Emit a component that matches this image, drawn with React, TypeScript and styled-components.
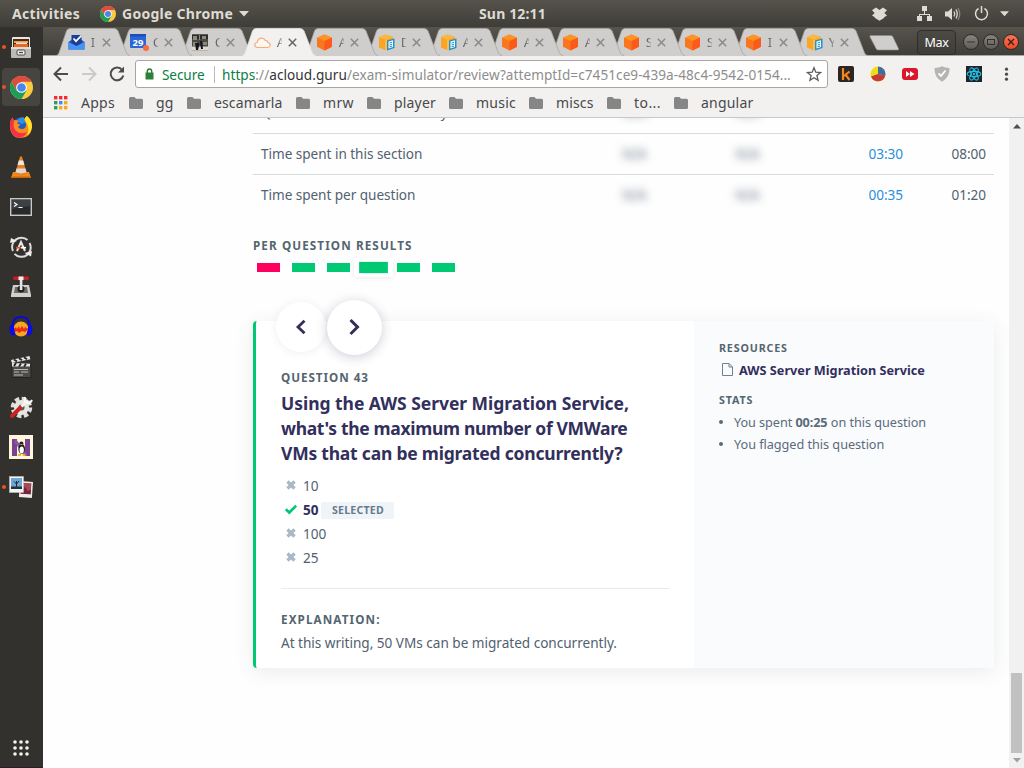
import React from 'react';
import styled, { createGlobalStyle, css } from 'styled-components';

const Global = createGlobalStyle`
  * { box-sizing: border-box; }
  html, body { margin: 0; padding: 0; overflow: hidden; }
  body { font-family: "Noto Sans", "Open Sans", sans-serif; font-size: 13.6px; color: #52616f; }
  svg { display: block; flex: none; }
`;

const Txt = styled.span<{ $ls?: number }>`
  white-space: pre;
  letter-spacing: ${(p) => p.$ls ?? 0}px;
`;

/* ---------- desktop ---------- */
const Desktop = styled.div`
  width: 1024px;
  height: 768px;
  display: flex;
  flex-direction: column;
  overflow: hidden;
  background: #fefefe;
`;
const TopBar = styled.header`
  height: 27px;
  flex: none;
  display: grid;
  grid-template-columns: 467px auto 1fr;
  align-items: center;
  padding: 0 15px 0 12px;
  color: #dfdbd2;
  font-size: 14px;
  font-weight: 700;
  background: linear-gradient(#55534b, #3f3d38);
`;
const TopLeft = styled.div`
  display: flex;
  align-items: center;
`;
const AppMenu = styled.div`
  display: flex;
  align-items: center;
  gap: 6px;
  margin-left: 20px;
`;
const TopRight = styled.div`
  display: flex;
  align-items: center;
  justify-content: flex-end;
`;
const Gap = styled.i<{ $w: number }>`
  width: ${(p) => p.$w}px;
  flex: none;
`;
const Main = styled.div`
  flex: 1;
  display: flex;
  min-height: 0;
`;
const Dock = styled.nav`
  width: 43px;
  flex: none;
  display: flex;
  flex-direction: column;
  background: #33312d;
  border-bottom: 1px solid #2e1c2c;
`;
const DockItem = styled.div<{ $running?: boolean }>`
  height: 40px;
  flex: none;
  display: flex;
  align-items: center;
  padding-left: 2px;
  &::before {
    content: "";
    width: 4px;
    height: 4px;
    border-radius: 50%;
    margin-right: -4px;
    z-index: 1;
    background: ${(p) => (p.$running ? '#e9541f' : 'transparent')};
  }
`;
const DockTile = styled.div<{ $active?: boolean }>`
  width: 38px;
  height: 38px;
  display: grid;
  place-items: center;
  border-radius: 4px;
  background: ${(p) => (p.$active ? '#474540' : 'transparent')};
`;
const DockApps = styled.div`
  margin: auto 0 11px 13px;
`;

/* ---------- browser ---------- */
const Browser = styled.div`
  flex: 1;
  display: flex;
  flex-direction: column;
  min-width: 0;
`;
const TabStrip = styled.div`
  height: 29px;
  flex: none;
  display: flex;
  align-items: flex-start;
  padding: 1px 5px 0 13px;
  background: linear-gradient(#57544c, #403e39);
  border-bottom: 1px solid #a9a7a4;
`;
const TabBox = styled.div<{ $w: number; $z: number }>`
  width: ${(p) => p.$w}px;
  height: 28px;
  flex: none;
  display: flex;
  align-items: center;
  position: relative;
  z-index: ${(p) => p.$z};
  padding-left: 12px;
`;
const TabShape = styled.svg`
  position: absolute;
  left: 0;
  top: 0;
  z-index: -1;
`;
const TabIcon = styled.span`
  width: 17px;
`;
const TabTitle = styled.span`
  width: 5px;
  margin-left: 6px;
  overflow: hidden;
  white-space: nowrap;
  font-size: 12px;
  color: #4a4a4a;
  -webkit-mask-image: linear-gradient(90deg, #000 10%, rgba(0, 0, 0, 0.25));
`;
const TabClose = styled.svg`
  margin-left: 6px;
`;
const WinButtons = styled.div`
  display: flex;
  align-items: center;
  gap: 4px;
  height: 28px;
  margin-left: auto;
`;
const UserButton = styled.div`
  width: 39px;
  height: 25px;
  margin-right: 3px;
  display: grid;
  place-items: center;
  border: 1px solid #2f2d2a;
  border-radius: 4px;
  background: linear-gradient(#4b4943, #403e3a);
  color: #fff;
  font-size: 12.6px;
`;
const WinButton = styled.div<{ $close?: boolean }>`
  width: 16px;
  height: 16px;
  border-radius: 50%;
  display: grid;
  place-items: center;
  border: 1px solid #2d2c28;
  background: ${(p) => (p.$close ? 'linear-gradient(#f7745a,#ec4a23)' : 'linear-gradient(#85837b,#5f5d56)')};
`;
const Toolbar = styled.div`
  height: 36px;
  flex: none;
  display: flex;
  align-items: center;
  padding: 0 9px;
  background: #f2f1f0;
`;
const UrlBox = styled.div`
  width: 693px;
  height: 28px;
  flex: none;
  display: flex;
  align-items: center;
  margin: 0 10px 0 9px;
  padding: 0 5px 0 8px;
  background: #fff;
  border: 1px solid #a8a6a3;
  border-radius: 3px;
  color: #8e8e8e;
`;
const Secure = styled.span`
  margin-left: 7px;
  width: 53px;
  color: #0b8043;
  white-space: nowrap;
  border-right: 1px solid #b9b9b9;
  line-height: 17px;
`;
const Url = styled.span`
  margin-left: 7px;
  white-space: nowrap;
  flex: 1;
  b { font-weight: 400; color: #0b8043; }
  em { font-style: normal; color: #333; }
`;
const Extensions = styled.div`
  display: flex;
  gap: 16px;
`;
const Bookmarks = styled.div`
  height: 26px;
  flex: none;
  display: flex;
  padding: 0 0 4px 11px;
  background: #f2f1f0;
  border-bottom: 1px solid #c9c8c6;
  color: #47494c;
  font-size: 14px;
`;
const Bookmark = styled.div<{ $w: number }>`
  width: ${(p) => p.$w}px;
  display: flex;
  align-items: center;
  gap: 13px;
`;
const Viewport = styled.div`
  flex: 1;
  display: flex;
  min-height: 0;
`;
const Page = styled.main`
  width: 966px;
  padding-left: 210px;
  overflow: hidden;
`;
const Scrollbar = styled.div`
  width: 15px;
  display: flex;
  flex-direction: column;
  align-items: center;
  padding: 6px 0 5px;
  background: #f1f1f1;
`;
const Thumb = styled.div`
  width: 11px;
  height: 80px;
  margin: auto 0 5px;
  background: #c1c1c1;
`;

/* ---------- results page ---------- */
const Row = styled.div`
  width: 741px;
  height: 41px;
  display: grid;
  grid-template-columns: 317px 113px 113px 99px 83px;
  align-items: center;
  padding: 0 8px 2px;
  border-bottom: 1px solid #d9dadc;
  &:first-child { margin-top: -25px; padding-bottom: 4px; }
  &:last-child { border-bottom: 0; }
`;
const Blurred = styled.span`
  justify-self: center;
  color: transparent;
  text-shadow: 0 0 8px rgba(82, 97, 120, 0.9);
`;
const Value = styled.span<{ $blue?: boolean }>`
  justify-self: end;
  letter-spacing: -0.05px;
  color: ${(p) => (p.$blue ? '#2a8fdd' : '#52616f')};
`;
const Heading = styled.h3<{ $ls: number; $size?: number }>`
  margin: 0;
  font-weight: 700;
  white-space: nowrap;
  color: #54656f;
  line-height: 16px;
  font-size: ${(p) => p.$size ?? 11.7}px;
  letter-spacing: ${(p) => p.$ls}px;
`;
const PerQuestion = styled.section`
  padding-top: 21px;
`;
const Marks = styled.div`
  display: flex;
  gap: 4px;
  margin-top: 7px;
`;
const Mark = styled.div<{ $bad?: boolean; $active?: boolean }>`
  padding: 3px 4px;
  ${(p) => p.$active && css`
    transform: scale(1.25);
    background: #fff;
    box-shadow: 0 1px 4px rgba(40, 50, 70, 0.1);
  `}
  &::before {
    content: "";
    display: block;
    width: 23px;
    height: 9px;
    background: ${(p) => (p.$bad ? '#ff0060' : '#00c873')};
  }
`;
const Card = styled.article`
  width: 741px;
  height: 347px;
  margin-top: 46px;
  display: flex;
  border-left: 3px solid #00c873;
  border-radius: 4px;
  background: #fff;
  box-shadow: 0 4px 20px rgba(40, 50, 80, 0.09);
`;
const Question = styled.div`
  width: 438px;
  padding: 0 25px;
`;
const Pager = styled.div`
  height: 54px;
  display: flex;
  align-items: center;
  gap: 1px;
  margin: -21px 0 15px -5px;
`;
const Round = styled.div<{ $big?: boolean }>`
  width: ${(p) => (p.$big ? 55 : 50)}px;
  height: ${(p) => (p.$big ? 55 : 50)}px;
  border-radius: 50%;
  display: grid;
  place-items: center;
  background: #fff;
  box-shadow: ${(p) => (p.$big ? '0 2px 12px rgba(50,46,95,0.24)' : '0 1px 10px rgba(50,46,95,0.08)')};
`;
const Title = styled.h2`
  margin: 6px 0 7px;
  font-size: 17.5px;
  line-height: 25px;
  font-weight: 700;
  color: #322f5c;
  span { display: block; }
`;
const Answer = styled.div<{ $right?: boolean }>`
  height: 24px;
  display: flex;
  align-items: center;
  padding-left: 4px;
  span { margin-left: 6px; letter-spacing: -0.05px; }
  ${(p) => p.$right && css`
    font-weight: 700;
    color: #322f5c;
  `}
`;
const Badge = styled.em`
  width: 73px;
  height: 17px;
  margin: 2px 0 0 3px;
  display: grid;
  place-items: center;
  border-radius: 2px;
  background: #f0f4f8;
  color: #647b8e;
  font-size: 10.6px;
  font-style: normal;
  letter-spacing: 0.2px;
`;
const Explanation = styled.div`
  margin-top: 19px;
  padding-top: 22px;
  border-top: 1px solid #e8eaec;
  p { margin: 6px 0 0; line-height: 20px; }
`;
const Aside = styled.aside`
  flex: 1;
  padding: 19px 25px;
  background: #fafbfd;
  border-radius: 0 4px 4px 0;
  font-size: 12.7px;
`;
const Resource = styled.div`
  height: 20px;
  display: flex;
  align-items: center;
  gap: 6px;
  margin: 4px 0 12px;
  padding-left: 3px;
  font-weight: 700;
  color: #322f5c;
  svg { margin-top: -2px; }
`;
const Stats = styled.div`
  margin-top: 3px;
`;
const Stat = styled.div`
  height: 22px;
  display: flex;
  align-items: center;
  color: #5a6b7b;
  &::before {
    content: "";
    width: 4px;
    height: 4px;
    border-radius: 50%;
    margin-right: 11px;
    background: #5a6b7b;
  }
`;

/* ---------- icons ---------- */
const Chrome = ({ s }: { s: number }) => (
  <svg width={s} height={s} viewBox="0 0 24 24">
    <circle cx="12" cy="12" r="12" fill="#fbca3f" />
    <path d="M1.6 6A12 12 0 0 1 22.4 6H12L6.8 15z" fill="#de4b3f" />
    <path d="M1.6 6A12 12 0 0 0 12 24L17.2 15 6.8 15z" fill="#1c9e5a" />
    <circle cx="12" cy="12" r="5.6" fill="#fff" />
    <circle cx="12" cy="12" r="4.5" fill="#4786ee" />
  </svg>
);
const Caret = ({ w }: { w: number }) => (
  <svg width={w} height="6" viewBox="0 0 10 6"><path d="M0 0H10L5 5.5z" fill="#dfdbd2" /></svg>
);

const dockIcons: Record<string, React.ReactNode> = {
  files: (
    <svg width="22" height="23" viewBox="0 0 22 23">
      <rect x="2" y="1" width="18" height="13" rx="1" fill="#e8e6e3" />
      <rect x="3" y="3" width="16" height="9" fill="#4b2c19" />
      <path d="M4 5H18V7H4z" fill="#f29b57" /><path d="M4 8H18V11H4z" fill="#e66a24" />
      <path d="M6 6.5H17V8H6z" fill="#fbe0c6" />
      <rect x="1" y="11" width="20" height="11" rx="1" fill="#bcbab7" />
      <rect x="1" y="11" width="20" height="2" fill="#dedcda" />
      <rect x="7" y="14" width="8" height="5" rx="1" fill="#f3f3f3" stroke="#4b4b4b" />
      <path d="M9 16.5H13" stroke="#444" strokeWidth="1.3" />
    </svg>
  ),
  chrome: <Chrome s={23} />,
  firefox: (
    <svg width="24" height="24" viewBox="0 0 24 24">
      <circle cx="12" cy="12" r="9.500" fill="#1f5fc4" />
      <path d="M9 4Q12 1.500 15 2.500L17 7 13 9 9 7z" fill="#2f8fe6" />
      <path d="M1 10Q1 5 3.500 2.500L5 5.500Q7.500 4.500 9.500 6L8 8.300Q10 9 11.500 9.500L9 12Q10 14.500 14 14Q17.500 13 17 9L15.500 4.500Q16 2 18 1Q23 5 23 12Q22 23 12 23Q1 23 1 10z" fill="#fb8b1e" />
      <path d="M1 10Q1 5 3.500 2.500L5 6Q3.500 12 7 16Q12 20 18 17Q15 23 10 22.800Q1 21 1 10z" fill="#f4304b" />
      <path d="M18 1Q23 5 23 12Q22 18 18 20Q21 14 17.500 8L15.500 4.500Q16 2 18 1z" fill="#ffe226" />
    </svg>
  ),
  vlc: (
    <svg width="22" height="24" viewBox="0 0 22 24">
      <path d="M3 17H19L21 23H1z" fill="#f08a1d" /><path d="M1 21.500H21V23H1z" fill="#c96509" />
      <path d="M10 1.500h2L17 19Q11 22 5 19z" fill="#ee7f16" />
      <path d="M8.800 5.500h4.400l1.200 4.500H7.600z" fill="#e8e8e8" />
      <path d="M6.500 13.500h9l1 3.800Q11 19.500 5.500 17.300z" fill="#dadada" />
    </svg>
  ),
  terminal: (
    <svg width="22" height="18" viewBox="0 0 22 18">
      <rect x=".7" y=".7" width="20.600" height="16.600" fill="#27292b" stroke="#c9c9c7" strokeWidth="1.400" />
      <path d="M2 2H20V8L2 11z" fill="#3d4042" />
      <path d="M4 4.500l3 2-3 2M8.500 9.500H12.500" stroke="#fff" strokeWidth="1.200" fill="none" />
    </svg>
  ),
  updater: (
    <svg width="24" height="24" viewBox="0 0 24 24" fill="none">
      <path d="M4 16A9.300 9.300 0 0 1 18.500 5M20.500 8A9.300 9.300 0 0 1 5.500 18.800" stroke="#dcdcdc" strokeWidth="2" />
      <path d="M1 8L2 3 8 6zM23 16L22 21.500 15.500 18z" fill="#eee" />
      <path d="M8 16L12 7L16 16" stroke="#e8e8e8" strokeWidth="2" />
      <path d="M7 12.700H12" stroke="#e9541f" strokeWidth="1.600" /><path d="M12 12.700H17" stroke="#fff" strokeWidth="1.600" />
    </svg>
  ),
  startup: (
    <svg width="22" height="24" viewBox="0 0 22 24">
      <path d="M3 10H19L21 20V22H1V20z" fill="#cfcfcc" /><path d="M5 12H17L18 18H4z" fill="#6b6b68" />
      <circle cx="11" cy="14" r="3.500" fill="#222" /><rect x="9.800" y="4" width="2.600" height="11" fill="#e5e5e5" />
      <rect x="3" y="1.500" width="16" height="3.600" rx="1.800" fill="#cc1d1d" /><rect x="8.500" y="1.500" width="5" height="3.600" fill="#efefef" />
    </svg>
  ),
  audacity: (
    <svg width="24" height="22" viewBox="0 0 24 22">
      <circle cx="12" cy="13" r="7.500" fill="#f5a623" />
      <path d="M5 13l2-2 1 2 2-3 1 3 2-3 2 3 1-2 3 2-3 3-3-1-3 2-2-2-2 1z" fill="#ee2b12" />
      <path d="M3.500 12Q3 1 12 1T20.500 12" fill="none" stroke="#0909d8" strokeWidth="2" />
      <path d="M1 10Q3 7 4.500 9L6.500 19Q2 21 .500 15zM23 10Q21 7 19.500 9L17.500 19Q22 21 23.500 15z" fill="#0b0be8" />
    </svg>
  ),
  video: (
    <svg width="22" height="24" viewBox="0 0 22 24">
      <rect x="2" y="11" width="19" height="11.500" fill="#4c4c4a" stroke="#242424" />
      <path d="M2 8L20 8.800V11.500H2z" fill="#e8e8e8" /><path d="M1 5L19.500 1 20.300 4.200 2 8z" fill="#e6e6e6" />
      <path d="M4 4.500l3 2M9 3.300l3 2M14 2.200l3 2M6 8l-2 3M11 8.500l-2 3M16 8.700l-2 3" stroke="#272727" strokeWidth="1.900" />
      <path d="M4 14.500H18M4 17H9M11 17H18M4 20H13" stroke="#b8b8b6" />
    </svg>
  ),
  tools: (
    <svg width="24" height="24" viewBox="0 0 24 24">
      <circle cx="12.500" cy="12.500" r="8.500" fill="none" stroke="#dededb" strokeWidth="4.500" strokeDasharray="4.300 2.370" />
      <circle cx="12.500" cy="12.500" r="7.500" fill="#e6e6e3" /><circle cx="12.500" cy="12.500" r="3" fill="#575753" />
      <path d="M3 21L12 12" stroke="#c92424" strokeWidth="4" strokeLinecap="round" />
      <path d="M12.500 11.500L19 5" stroke="#f4f4f2" strokeWidth="3" /><path d="M16 2Q15 7 18 8T23 5" fill="none" stroke="#fafafa" strokeWidth="2" />
    </svg>
  ),
  network: (
    <svg width="24" height="24" viewBox="0 0 24 24">
      <rect width="24" height="24" fill="#fff6dc" />
      <path d="M3 4H8V21H3zM16 4H21V21H16z" fill="#7a4291" /><path d="M7 4L18 19V21L16 21 5 7z" fill="#8a5aa0" />
      <ellipse cx="12.700" cy="14" rx="3.300" ry="5" fill="#191919" /><ellipse cx="12.700" cy="15" rx="2.200" ry="3.500" fill="#fff" />
      <circle cx="12.400" cy="8.500" r="2" fill="#222" /><path d="M9 19h3v1.700H9zM13.500 19h3v1.700h-3zM11.500 9h2v1h-2z" fill="#f2a817" />
    </svg>
  ),
  shotwell: (
    <svg width="24" height="22" viewBox="0 0 24 22">
      <g transform="rotate(4 17 13)"><rect x="10.500" y="5.500" width="13" height="16" fill="#eeecea" /><rect x="12" y="7" width="10" height="11" fill="#a34a55" /><path d="M12 14l4-3 3 4 3-2v5H12z" fill="#75263a" /></g>
      <rect x=".5" y=".5" width="14" height="16" fill="#f4f4f4" stroke="#c7c7c7" strokeWidth=".5" />
      <rect x="2" y="2" width="11" height="11" fill="#6ea6d4" /><path d="M2 10.500H13V13H2z" fill="#22313d" />
      <path d="M7.500 11V5M7.500 8L5 5.500M7.500 8L10 5" stroke="#1d2a33" strokeWidth="1" />
    </svg>
  ),
};
const dock: { id: string; running?: boolean; active?: boolean }[] = [
  { id: 'files', running: true }, { id: 'chrome', running: true, active: true }, { id: 'firefox' }, { id: 'vlc' },
  { id: 'terminal' }, { id: 'updater' }, { id: 'startup' }, { id: 'audacity' }, { id: 'video' }, { id: 'tools' },
  { id: 'network' }, { id: 'shotwell', running: true },
];

const CubeOrange = () => (
  <svg width="17" height="17" viewBox="0 0 17 17">
    <path d="M8.500 .5L16 3.800V12.800L8.500 16.500 1 12.800V3.800z" fill="#f8761f" />
    <path d="M8.500 .5L16 3.800 8.500 7 1 3.800z" fill="#ff9320" /><path d="M8.500 7L16 3.800V12.800L8.500 16.500z" fill="#fb5a1a" />
  </svg>
);
const CubeDoc = () => (
  <svg width="17" height="17" viewBox="0 0 17 17">
    <path d="M7.500 .5L15 3V13L8 16.500 1 13.500V3.200z" fill="#faa524" />
    <path d="M7.500 .5L15 3 8 5.800 1 3.200z" fill="#fbb840" /><path d="M8 5.800V16.500" stroke="#fdd28a" />
    <path d="M9 6.500L16.500 4.500V14L9 16.500z" fill="#1f93cd" /><path d="M10.500 7.500L15 6.300V13L10.500 14.500z" fill="#fff" />
    <path d="M11.500 9l2.500-.7M11.500 11l2.500-.7M11.500 12.800l2.500-.7" stroke="#1f93cd" />
  </svg>
);
const favicons: Record<string, React.ReactNode> = {
  inbox: (
    <svg width="17" height="17" viewBox="0 0 17 17">
      <path d="M.5 8L4 5.500V2Q4 1 5 1H12Q13 1 13 2V5.500L16.500 8V15.500H.5z" fill="#1756c4" />
      <path d="M3.500 1H13.500V10L8.500 12 3.500 10z" fill="#1b3f93" /><path d="M5.500 4.500l2.500 2.700L13.500 1.500" fill="none" stroke="#fff" strokeWidth="1.700" />
      <path d="M.5 8L8.500 12 16.500 8V15.500H.5z" fill="#4a93f5" />
    </svg>
  ),
  calendar: (
    <svg width="19" height="18" viewBox="0 0 19 18">
      <rect y="1" width="16" height="14" rx="1" fill="#2b66d9" /><path d="M0 1H16V3.500H0z" fill="#1c4fb5" />
      <text x="8" y="12.600" textAnchor="middle" fontFamily="Noto Sans" fontWeight="700" fontSize="9.500" fill="#fff">29</text>
      <circle cx="16" cy="15" r="3" fill="#fd6a3f" />
    </svg>
  ),
  photo: (
    <svg width="17" height="17" viewBox="0 0 17 17">
      <rect width="16" height="16" y=".5" fill="#4a4943" /><path d="M0 .5H16V5H0z" fill="#2c2b28" />
      <path d="M1 2h4v4H1zM7 1h1v5H7zM10 2h4v3h-4z" fill="#8d8b80" />
      <path d="M0 12.500H16V16.500H0z" fill="#ded8cf" /><path d="M1 8H5V12H1zM11 8H15V11H11z" fill="#8a8880" />
      <path d="M3 9h4v3l-1 4H4zM8 7h2l1 8H9z" fill="#15151a" />
    </svg>
  ),
  cloud: (
    <svg width="17" height="17" viewBox="0 0 17 17">
      <path d="M3.500 13.500Q.7 13.300 .8 10.800Q1 8.700 3.200 8.500Q4 4.200 7.700 4.200Q10.200 4.200 11.300 6.500Q13.500 6.300 14 8.500Q16.300 9 16.200 11.200Q16 13.300 13.800 13.500z" fill="#fff8f2" stroke="#f8aa78" strokeWidth="1.200" />
    </svg>
  ),
  cube: <CubeOrange />,
  doc: <CubeDoc />,
};
const tabs: [string, string, number, boolean?][] = [
  ['inbox', 'I', 62], ['calendar', 'C', 62], ['photo', 'C', 62], ['cloud', 'A', 62, true], ['cube', 'A', 62],
  ['doc', 'D', 62], ['doc', 'A', 61], ['cube', 'A', 61], ['cube', 'A', 61], ['cube', 'S', 61], ['cube', 'S', 61],
  ['cube', 'I', 61], ['doc', 'Y', 61],
];
const Tab = ({ t, i }: { t: (typeof tabs)[number]; i: number }) => (
  <TabBox $w={t[2]} $z={t[3] ? 30 : 20 - i}>
    <TabShape width="76" height="29" viewBox="0 0 76 29">
      <path d="M0 28Q2 27.500 3 25L10.500 3Q11.500 .500 14 .500H58Q61 .500 62 3L70.500 25Q71.500 27.500 74 28z" fill={t[3] ? '#f2f1f0' : '#d0cecc'} />
      <path d="M0 27.500Q2 27.500 3 25L10.500 3Q11.500 .500 14 .500H58Q61 .500 62 3L70.500 25Q71.500 27.500 74 27.500" fill="none" stroke={t[3] ? '#e2e1df' : '#a9a7a4'} strokeWidth=".8" />
      {t[3] && <path d="M0 28.500H75" stroke="#f2f1f0" />}
    </TabShape>
    <TabIcon>{favicons[t[0]]}</TabIcon>
    <TabTitle>{t[1]}</TabTitle>
    <TabClose width="9" height="9" viewBox="0 0 9 9">
      <path d="M.8 .8L8.200 8.200M8.200 .8L.8 8.200" stroke={t[3] ? '#666' : '#8b8a88'} strokeWidth="1.500" />
    </TabClose>
  </TabBox>
);

const Folder = () => (
  <svg width="14" height="12" viewBox="0 0 14 12"><path d="M0 1.500Q0 0 1.500 0H5.500L7 1.800H12.500Q14 1.800 14 3.300V10.500Q14 12 12.500 12H1.500Q0 12 0 10.500z" fill="#868686" /></svg>
);
const AppsGrid = () => (
  <svg width="14" height="14" viewBox="0 0 14 14">
    {['#f22b35', '#f22b35', '#f22b35', '#2f9e57', '#4285f4', '#f9a825', '#2f9e57', '#f9a825', '#f9a825'].map((c, i) => (
      <rect key={i} x={(i % 3) * 5} y={Math.floor(i / 3) * 5} width="3.400" height="3.400" fill={c} />
    ))}
  </svg>
);
const bookmarks: [string, number, number][] = [
  ['gg', 58, 0.15], ['escamarla', 109, 0.13], ['mrw', 71, 0.37], ['player', 82, 0.18], ['music', 80, 0.24],
  ['miscs', 78, 0.13], ['to...', 67, 0.44], ['angular', 80, 0.21],
];

const Wrong = () => (
  <svg width="12" height="12" viewBox="0 0 12 12"><path d="M2.500 2.500L9.500 9.500M9.500 2.500L2.500 9.500" stroke="#a9b8c6" strokeWidth="3.300" /></svg>
);
const Right = () => (
  <svg width="12" height="12" viewBox="0 0 12 12"><path d="M.8 6.200L4.300 9.500 11.200 2.600" stroke="#00c873" strokeWidth="2.700" fill="none" /></svg>
);

const rows: [string, number, string, string][] = [
  ['Questions answered correctly', -0.1, '', ''],
  ['Time spent in this section', -0.04, '03:30', '08:00'],
  ['Time spent per question', -0.05, '00:35', '01:20'],
];
const marks = ['bad', 'ok', 'ok', 'active', 'ok', 'ok'];

export default function App() {
  return (
    <Desktop>
      <Global />
      <TopBar>
        <TopLeft>
          <Txt $ls={0.3}>Activities</Txt>
          <AppMenu>
            <Chrome s={16} />
            <Txt $ls={0.27}>Google Chrome</Txt>
            <Caret w={10} />
          </AppMenu>
        </TopLeft>
        <Txt $ls={0.16}>Sun 12:11</Txt>
        <TopRight>
          <svg width="15" height="14" viewBox="0 0 15 14"><path d="M4 .500L7.500 3 11 .500 15 3.300 12.300 6 15 8.500 12.200 10.300 12 11 7.500 13.800 3 11 2.800 10.300 0 8.500 2.700 6 0 3.300z" fill="#dfdbd2" /></svg>
          <Gap $w={30} />
          <svg width="15" height="15" viewBox="0 0 15 15" fill="#dfdbd2"><path d="M5 0h5v5H5zM0 10h5v5H0zM10 10h5v5h-5zM7 5h1v3h5v2h-1V9H3v1H2V8h5z" /></svg>
          <Gap $w={13} />
          <svg width="16" height="14" viewBox="0 0 16 14" fill="none" stroke="#dfdbd2" strokeWidth="1.300"><path d="M0 4.500H3L7 1V13L3 9.500H0z" fill="#dfdbd2" stroke="none" /><path d="M9 4.500Q10.500 7 9 9.500M11 2.500Q13.500 7 11 11.500" /><path d="M13 1Q16.500 7 13 13" stroke="#89867e" /></svg>
          <Gap $w={13} />
          <svg width="15" height="15" viewBox="0 0 15 15" fill="none" stroke="#dfdbd2" strokeWidth="1.500"><path d="M4.500 2.500A6 6 0 1 0 10.500 2.500M7.500 0V7" /></svg>
          <Gap $w={11} />
          <Caret w={9} />
        </TopRight>
      </TopBar>
      <Main>
        <Dock>
          {dock.map((d) => (
            <DockItem key={d.id} $running={d.running}>
              <DockTile $active={d.active}>{dockIcons[d.id]}</DockTile>
            </DockItem>
          ))}
          <DockApps>
            <svg width="16" height="16" viewBox="0 0 16 16" fill="#f2f2f0">
              {[0, 1, 2, 3, 4, 5, 6, 7, 8].map((i) => <circle key={i} cx={2 + (i % 3) * 6} cy={2 + Math.floor(i / 3) * 6} r="1.800" />)}
            </svg>
          </DockApps>
        </Dock>
        <Browser>
          <TabStrip>
            {tabs.map((t, i) => <Tab key={i} t={t} i={i} />)}
            <svg width="48" height="28" viewBox="0 0 48 28"><path d="M16.500 7.500H37Q38.500 7.500 39 9L44.500 20.500Q45 22 43.500 22H24Q22.500 22 22 20.500L16 9Q15.500 7.500 16.500 7.500z" transform="translate(-1 0)" fill="#d0cecc" stroke="#8b8985" strokeWidth=".6" /></svg>
            <WinButtons>
              <UserButton><Txt $ls={-0.4}>Max</Txt></UserButton>
              <WinButton><svg width="8" height="8"><path d="M0 4H8" stroke="#33322e" /></svg></WinButton>
              <WinButton><svg width="8" height="8" fill="none"><rect x=".5" y="1.500" width="7" height="5" stroke="#33322e" /></svg></WinButton>
              <WinButton $close><svg width="8" height="8"><path d="M1 1L7 7M7 1L1 7" stroke="#3c1a10" strokeWidth="1.300" /></svg></WinButton>
            </WinButtons>
          </TabStrip>
          <Toolbar>
            <svg width="18" height="18" viewBox="0 0 18 18" fill="none" stroke="#4c4c4c" strokeWidth="2"><path d="M16 9H3M9 2.500L2.500 9 9 15.500" /></svg>
            <Gap $w={10} />
            <svg width="18" height="18" viewBox="0 0 18 18" fill="none" stroke="#cbcac9" strokeWidth="2"><path d="M2 9H15M9 2.500L15.500 9 9 15.500" /></svg>
            <Gap $w={10} />
            <svg width="18" height="18" viewBox="0 0 18 18" fill="none" stroke="#4c4c4c" strokeWidth="2"><path d="M14.200 5A6.400 6.400 0 1 0 15.300 10.500" /><path d="M16 1.500V7.500H10z" fill="#4c4c4c" stroke="none" /></svg>
            <UrlBox>
              <svg width="11" height="12" viewBox="0 0 11 12"><path d="M1.500 4.500H9.500V11.500H1.500z" fill="#2c8038" /><path d="M3.300 5V3.200Q3.300 1 5.500 1T7.700 3.200V5" fill="none" stroke="#2c8038" strokeWidth="1.400" /></svg>
              <Secure><Txt $ls={-0.1}>Secure</Txt></Secure>
              <Url><Txt $ls={0.05}><b>https</b>://<em>acloud.guru</em>/exam-simulator/review?attemptId=c7451ce9-439a-48c4-9542-0154...</Txt></Url>
              <svg width="16" height="16" viewBox="0 0 16 16"><path d="M8 1.700L9.800 6.200 14.600 6.500 10.900 9.600 12.100 14.300 8 11.700 3.900 14.300 5.100 9.600 1.400 6.500 6.200 6.200z" fill="none" stroke="#5c5c5c" strokeWidth="1.300" /></svg>
            </UrlBox>
            <Extensions>
              <svg width="16" height="16" viewBox="0 0 16 16"><rect width="16" height="16" rx="2" fill="#2b2523" /><path d="M5 2V14M11.500 5.500L6 10M7.500 8.700L11.500 14" stroke="#f9851b" strokeWidth="2.200" fill="none" /></svg>
              <svg width="16" height="16" viewBox="0 0 16 16"><circle cx="8" cy="8" r="7.500" fill="#f2dc15" /><path d="M8 8V.5A7.500 7.500 0 0 1 15.300 9.500z" fill="#3a6ea5" /><path d="M8 8L15.300 9.500A7.500 7.500 0 0 1 1 10.500z" fill="#c43c35" /></svg>
              <svg width="16" height="16" viewBox="0 0 16 16"><rect y="2" width="16" height="12" rx="3" fill="#d9182b" /><path d="M4 5L8 8 4 11zM8 5L12.500 8 8 11z" fill="#fff" /></svg>
              <svg width="16" height="16" viewBox="0 0 16 16"><path d="M.5 2Q5 2 8 .3Q11 2 15.500 2Q16 11 8 15.800Q0 11 .5 2z" fill="#b4b4b4" /><path d="M4.500 7.500L7 10 11.500 4.500" stroke="#fff" strokeWidth="1.800" fill="none" /></svg>
              <svg width="16" height="16" viewBox="0 0 16 16" fill="none" stroke="#1fc3ea" strokeWidth="1.100"><rect width="16" height="16" fill="#20232a" stroke="none" /><ellipse cx="8" cy="8" rx="6.800" ry="2.600" /><ellipse cx="8" cy="8" rx="6.800" ry="2.600" transform="rotate(60 8 8)" /><ellipse cx="8" cy="8" rx="6.800" ry="2.600" transform="rotate(120 8 8)" /><circle cx="8" cy="8" r="1.200" fill="#1fc3ea" stroke="none" /></svg>
              <svg width="16" height="16" viewBox="0 0 16 16" fill="#4c4c4c"><circle cx="8.500" cy="3.200" r="1.600" /><circle cx="8.500" cy="8.200" r="1.600" /><circle cx="8.500" cy="13.200" r="1.600" /></svg>
            </Extensions>
          </Toolbar>
          <Bookmarks>
            <Bookmark $w={75}><AppsGrid /><Txt $ls={0.28}>Apps</Txt></Bookmark>
            {bookmarks.map(([n, w, ls]) => <Bookmark key={n} $w={w}><Folder /><Txt $ls={ls}>{n}</Txt></Bookmark>)}
          </Bookmarks>
          <Viewport>
            <Page>
              <div>
                {rows.map(([label, ls, a, b]) => (
                  <Row key={label}>
                    <Txt $ls={ls}>{label}</Txt>
                    <Blurred>N/A</Blurred>
                    <Blurred>N/A</Blurred>
                    <Value $blue>{a}</Value>
                    <Value>{b}</Value>
                  </Row>
                ))}
              </div>
              <PerQuestion>
                <Heading $ls={1.1}>PER QUESTION RESULTS</Heading>
                <Marks>
                  {marks.map((m, i) => <Mark key={i} $bad={m === 'bad'} $active={m === 'active'} />)}
                </Marks>
              </PerQuestion>
              <Card>
                <Question>
                  <Pager>
                    <Round><svg width="12" height="16" viewBox="0 0 12 16"><path d="M9.500 1.800L3 8 9.500 14.200" fill="none" stroke="#322f5c" strokeWidth="2.800" /></svg></Round>
                    <Round $big><svg width="13" height="18" viewBox="0 0 13 18"><path d="M2.500 2L9.500 9 2.500 16" fill="none" stroke="#322f5c" strokeWidth="3" /></svg></Round>
                  </Pager>
                  <Heading $ls={0.95}>QUESTION 43</Heading>
                  <Title>
                    <Txt $ls={-0.04}>Using the AWS Server Migration Service,</Txt>
                    <Txt $ls={-0.33}>what's the maximum number of VMWare</Txt>
                    <Txt $ls={-0.22}>VMs that can be migrated concurrently?</Txt>
                  </Title>
                  <Answer><Wrong /><span>10</span></Answer>
                  <Answer $right><Right /><span>50</span><Badge>SELECTED</Badge></Answer>
                  <Answer><Wrong /><span>100</span></Answer>
                  <Answer><Wrong /><span>25</span></Answer>
                  <Explanation>
                    <Heading $ls={1.1}>EXPLANATION:</Heading>
                    <p><Txt $ls={-0.02}>At this writing, 50 VMs can be migrated concurrently.</Txt></p>
                  </Explanation>
                </Question>
                <Aside>
                  <Heading $ls={0.85} $size={10.7}>RESOURCES</Heading>
                  <Resource>
                    <svg width="11" height="13" viewBox="0 0 11 13" fill="none" stroke="#6d8296"><path d="M.5 .5H7L10.500 4V12.500H.5zM7 .5V4H10.500" /></svg>
                    <Txt $ls={0}>AWS Server Migration Service</Txt>
                  </Resource>
                  <Heading $ls={0.85} $size={10.7}>STATS</Heading>
                  <Stats>
                    <Stat><Txt $ls={-0.07}>You spent </Txt><Txt $ls={-0.1}><b>00:25</b></Txt><Txt $ls={-0.05}> on this question</Txt></Stat>
                    <Stat><Txt $ls={-0.04}>You flagged this question</Txt></Stat>
                  </Stats>
                </Aside>
              </Card>
            </Page>
            <Scrollbar>
              <svg width="8" height="5" viewBox="0 0 8 5"><path d="M4 0L8 4.500H0z" fill="#4f4f4f" /></svg>
              <Thumb />
              <svg width="8" height="5" viewBox="0 0 8 5"><path d="M0 0H8L4 4.500z" fill="#a0a0a0" /></svg>
            </Scrollbar>
          </Viewport>
        </Browser>
      </Main>
    </Desktop>
  );
}
